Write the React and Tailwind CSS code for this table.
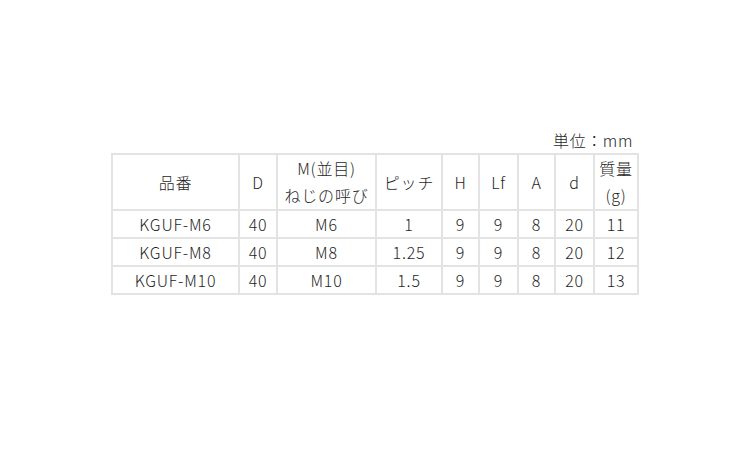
import React from 'react'

const rows = [
    ['KGUF-M6', '40', 'M6', '1', '9', '9', '8', '20', '11'],
    ['KGUF-M8', '40', 'M8', '1.25', '9', '9', '8', '20', '12'],
    ['KGUF-M10', '40', 'M10', '1.5', '9', '9', '8', '20', '13'],
]

const widths = [127, 38, 99, 66, 37, 39, 37, 39, 44]

export default function App() {
    return (
        <div
            className="w-[750px] h-[450px] bg-white text-[#1f1f1f] pt-[129px] pl-[111px] font-light"
            style={{ fontFamily: '"Noto Sans CJK JP", "Noto Sans", sans-serif' }}
        >
            <div className="w-[526px]">
                <div className="text-right text-[16px] leading-[22px] pr-[4px] mb-[2px] tracking-[0.6px]">単位：mm</div>
                <table className="table-fixed border-collapse w-[526px] text-[16px] text-center tracking-[0.8px]">
                    <colgroup>
                        {widths.map((w, i) => (
                            <col key={i} style={{ width: w }} />
                        ))}
                    </colgroup>
                    <thead>
                        <tr className="h-[48px]">
                            <th className="border-2 border-[#e3e3e3] font-light p-0">品番</th>
                            <th className="border-2 border-[#e3e3e3] font-light p-0">D</th>
                            <th className="border-2 border-[#e3e3e3] font-light p-0 leading-[27px] whitespace-nowrap">M(並目)<br />ねじの呼び</th>
                            <th className="border-2 border-[#e3e3e3] font-light p-0">ピッチ</th>
                            <th className="border-2 border-[#e3e3e3] font-light p-0">H</th>
                            <th className="border-2 border-[#e3e3e3] font-light p-0">Lf</th>
                            <th className="border-2 border-[#e3e3e3] font-light p-0">A</th>
                            <th className="border-2 border-[#e3e3e3] font-light p-0">d</th>
                            <th className="border-2 border-[#e3e3e3] font-light p-0 leading-[27px] whitespace-nowrap">質量<br />(g)</th>
                        </tr>
                    </thead>
                    <tbody>
                        {rows.map((r) => (
                            <tr key={r[0]} className="h-[28px]">
                                {r.map((c, i) => (
                                    <td key={i} className="border-2 border-[#e3e3e3] leading-[24px] p-0">{c}</td>
                                ))}
                            </tr>
                        ))}
                    </tbody>
                </table>
            </div>
        </div>
    )
}
